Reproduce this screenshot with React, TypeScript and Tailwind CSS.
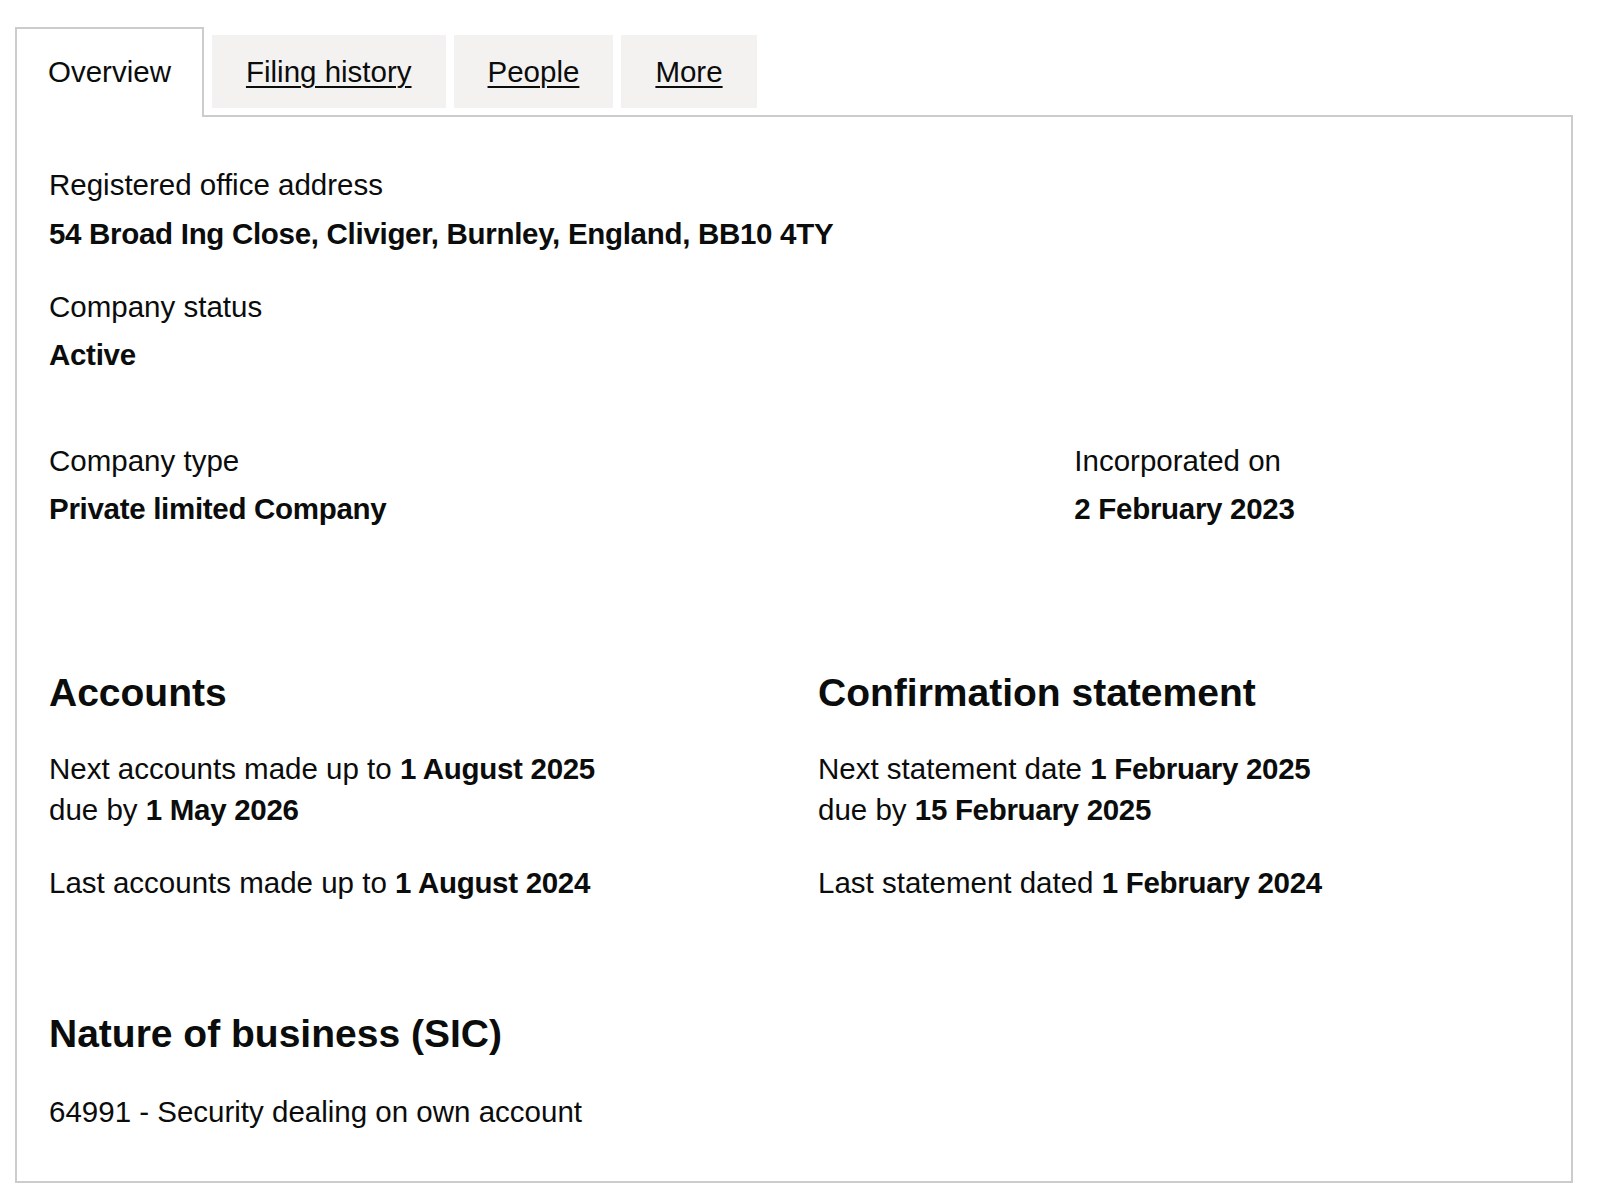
const tabs = ["Filing history", "People", "More"];

const label = "text-[29.5px] leading-[41px]";
const value = "font-bold tracking-[-0.3px]";

export default function App() {
  return (
    <div className="min-h-screen bg-white pt-[27px] pl-[15px] pr-[27px] font-['Liberation_Sans',Arial,sans-serif] text-[#0b0c0c]">
      <nav className="flex items-end gap-2">
        <div className="relative z-10 -mb-[2px] h-[90px] border-2 border-b-0 border-[#cbcccd] bg-white px-[31px] pt-[22px] text-[29.5px] leading-[41px]">
          Overview
        </div>
        {tabs.map((t) => (
          <a
            key={t}
            href="#"
            className="mb-[7px] flex h-[73px] items-center bg-[#f3f2f1] px-[34px] text-[29.5px] leading-[41px] text-[#0b0c0c] underline decoration-[1.5px] underline-offset-[4px]"
          >
            {t}
          </a>
        ))}
      </nav>

      <section className={`border-2 border-[#cbcccd] px-[32px] pt-[47px] pb-[49px] ${label}`}>
        <dl>
          <dt>Registered office address</dt>
          <dd className={`mt-[8px] ${value}`}>54 Broad Ing Close, Cliviger, Burnley, England, BB10 4TY</dd>
          <dt className="mt-[32px]">Company status</dt>
          <dd className={`mt-[7px] ${value}`}>Active</dd>
        </dl>

        <div className="-mx-[24px] mt-[65px] flex">
          <dl className="w-2/3 px-[24px]">
            <dt>Company type</dt>
            <dd className={`mt-[7px] ${value}`}>Private limited Company</dd>
          </dl>
          <dl className="w-1/3 px-[24px]">
            <dt>Incorporated on</dt>
            <dd className={`mt-[7px] ${value}`}>2 February 2023</dd>
          </dl>
        </div>

        <div className="-mx-[24px] mt-[141px] flex">
          <div className="w-1/2 px-[24px]">
            <h2 className="text-[39px] leading-[46px] font-bold">Accounts</h2>
            <p className="mt-[32px]">
              Next accounts made up to <strong className={value}>1 August 2025</strong>
              <br />
              due by <strong className={value}>1 May 2026</strong>
            </p>
            <p className="mt-[32px]">
              Last accounts made up to <strong className={value}>1 August 2024</strong>
            </p>
          </div>
          <div className="w-1/2 px-[24px]">
            <h2 className="text-[39px] leading-[46px] font-bold">Confirmation statement</h2>
            <p className="mt-[32px]">
              Next statement date <strong className={value}>1 February 2025</strong>
              <br />
              due by <strong className={value}>15 February 2025</strong>
            </p>
            <p className="mt-[32px]">
              Last statement dated <strong className={value}>1 February 2024</strong>
            </p>
          </div>
        </div>

        <h2 className="mt-[108px] text-[39px] leading-[46px] font-bold">Nature of business (SIC)</h2>
        <p className="mt-[34px]">64991 - Security dealing on own account</p>
      </section>
    </div>
  );
}
